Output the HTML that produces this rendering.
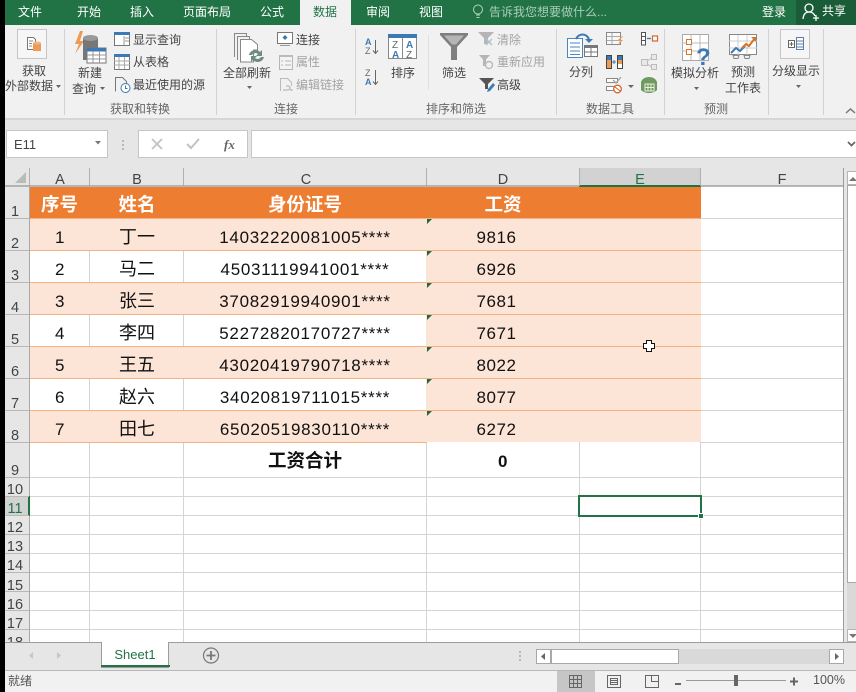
<!DOCTYPE html>
<html><head><meta charset="utf-8"><style>
html,body{margin:0;padding:0;background:#000}
svg{display:block;position:absolute;left:0;top:0}
text{font-family:"Liberation Sans","Noto Sans CJK SC",sans-serif;white-space:pre}
.r{font-size:12px;fill:#444}
.d{font-size:12px;fill:#a3a3a3}
.g{font-size:12px;fill:#666}
.m{text-anchor:middle}
.tab{font-size:12px;fill:#fff;text-anchor:middle}
.hd{font-size:14.5px;fill:#444;text-anchor:middle}
.rn{font-size:14.5px;fill:#444;text-anchor:middle}
.c{font-size:18px;fill:#111;text-anchor:middle}
.n{font-size:17px;fill:#111;text-anchor:middle;letter-spacing:.55px}
.i{font-size:17px;fill:#111;text-anchor:middle;letter-spacing:.7px}
.h{font-size:18.500px;fill:#fff;text-anchor:middle;font-weight:bold}
.b{font-size:18.500px;fill:#111;text-anchor:middle;font-weight:bold}
</style></head><body>
<svg width="856" height="692" viewBox="0 0 856 692" xmlns="http://www.w3.org/2000/svg">
<rect x="5" width="851" height="692" fill="#e6e6e6"/>
<!-- title tabs -->
<rect x="5" width="851" height="25" fill="#217346"/>
<rect x="796" width="60" height="25" fill="#1a5c38"/>
<rect x="5" y="25" width="851" height="93" fill="#f1f1f1"/>
<rect x="300" width="51" height="26" fill="#f1f1f1"/>
<rect x="5" y="118" width="851" height="2" fill="#d6d6d6"/>
<text class="tab" x="30" y="16">文件</text>
<text class="tab" x="89" y="16">开始</text>
<text class="tab" x="142" y="16">插入</text>
<text class="tab" x="207" y="16">页面布局</text>
<text class="tab" x="272" y="16">公式</text>
<text class="tab" x="325" y="16" style="fill:#217346">数据</text>
<text class="tab" x="378" y="16">审阅</text>
<text class="tab" x="431" y="16">视图</text>
<g fill="none" stroke="#b5d2c1"><circle cx="478" cy="9.500" r="4.500"/><path d="M476 15h4M476.500 17.500h3"/></g>
<text x="489" y="16" style="font-size:12px;fill:#a9cdb9">告诉我您想要做什么...</text>
<text class="tab" x="774" y="16">登录</text>
<g fill="none" stroke="#fff" stroke-width="1.300"><circle cx="809" cy="8" r="4"/><path d="M803 19c.5-5 3-7 6-7s5 1.500 6 4M813 18h6M816 15v6"/></g>
<text class="tab" x="834" y="15">共享</text>

<!-- group separators -->
<g stroke="#d2d2d2"><path d="M64.500 29v86M216.500 29v86M355.500 29v86M556.500 29v86M664.500 29v86M768.500 29v86M823.500 29v86"/><path d="M428.500 35v55" stroke="#e0e0e0"/></g>
<!-- group labels -->
<text class="g m" x="140" y="113">获取和转换</text>
<text class="g m" x="286" y="113">连接</text>
<text class="g m" x="456" y="113">排序和筛选</text>
<text class="g m" x="610" y="113">数据工具</text>
<text class="g m" x="716" y="113">预测</text>
<path d="M846 113l4.500-4 4.500 4" fill="none" stroke="#777" stroke-width="1.500"/>

<!-- 获取外部数据 -->
<rect x="17.500" y="29.500" width="29" height="29" fill="#f6f6f6" stroke="#c6c6c6"/>
<path d="M27.500 37.500h6l2 2v10h-8z" fill="#fff" stroke="#777"/><path d="M29 41h4M29 43.500h3M29 46h3" stroke="#888"/>
<path d="M33 43h8v8h-8z" fill="#ed9a56"/><ellipse cx="37" cy="43" rx="4" ry="1.500" fill="#f4b183"/>
<text class="r m" x="34" y="75">获取</text>
<text class="r" x="5" y="90">外部数据</text>
<path d="M56 85h5l-2.500 3z" fill="#666"/>

<!-- 新建查询 -->
<path d="M80 31l-5 13h4l-4 10 9-13h-4l3-10z" fill="#ed9a56"/>
<path d="M83 38h15v22H83z" fill="#777"/><ellipse cx="90.500" cy="38" rx="7.500" ry="3" fill="#999"/>
<rect x="87" y="48" width="19" height="15" fill="#fff" stroke="#777"/><rect x="87" y="48" width="19" height="3.500" fill="#3d7ab5"/>
<path d="M87 55h19M87 59h19M93 51v12M99.500 51v12" stroke="#999"/>
<text class="r m" x="90" y="77">新建</text>
<text class="r m" x="84" y="93">查询</text>
<path d="M100 87h5l-2.500 3z" fill="#666"/>

<rect x="114.500" y="32.500" width="15" height="13" fill="#fff" stroke="#777"/><rect x="114" y="32" width="16" height="3" fill="#3d7ab5"/><path d="M124 36v9M125 38h4M125 41h4" stroke="#999"/>
<text class="r" x="133" y="44">显示查询</text>
<rect x="114.500" y="55.500" width="15" height="14" fill="#fff" stroke="#777"/><rect x="114" y="54" width="16" height="3" fill="#3d7ab5"/><path d="M114 61h16M114 65h16M119 57v12M124.500 57v12" stroke="#aaa"/>
<text class="r" x="133" y="66">从表格</text>
<path d="M115.500 91.500v-14h7l4 4v4" fill="none" stroke="#777"/><circle cx="125.500" cy="88" r="4.500" fill="#fff" stroke="#3d7ab5"/><path d="M125.500 85.500v3h2" stroke="#3d7ab5" fill="none"/>
<text class="r" x="133" y="89">最近使用的源</text>

<!-- 全部刷新 -->
<path d="M234.500 57V33.500h12v3M237.500 60V36.500h12v3" fill="none" stroke="#888"/><path d="M240.500 62V39.500h11l6 5V50h-4v12z" fill="#fff" stroke="#888"/>
<path d="M249 55a6.500 6.500 0 0 1 11-3l2-2v6h-6l2-2a4 4 0 0 0-6 1zM264 57a6.500 6.500 0 0 1-11 3l-2 2v-6h6l-2 2a4 4 0 0 0 6-1z" fill="#6f8c7e"/>
<text class="r m" x="247" y="77">全部刷新</text>
<path d="M247 86h5l-2.500 3z" fill="#666"/>

<!-- 连接 -->
<rect x="277.500" y="32.500" width="15" height="11" fill="#fff" stroke="#777"/><path d="M285 35l2.500 2.500-2.500 2.500-2.500-2.500z" fill="#3d7ab5"/><path d="M280 45.500h10" stroke="#999"/>
<text class="r" x="296" y="44">连接</text>
<rect x="279.500" y="55.500" width="13" height="14" fill="#f4f4f4" stroke="#b5b5b5"/><rect x="279" y="55" width="14" height="2" fill="#bbb"/><path d="M281 61h2M285 61h6M281 65h2M285 65h6" stroke="#b5b5b5"/>
<text class="d" x="296" y="66">属性</text>
<path d="M280.500 91V78.500h7l4 4V86" fill="none" stroke="#bbb"/><path d="M283 90h5a2 2 0 0 0 0-4h-2M293 90h-3" fill="none" stroke="#aaa"/>
<text class="d" x="296" y="89">编辑链接</text>

<!-- sort -->
<text x="365" y="45" style="font-size:9px;font-weight:bold;fill:#3d7ab5">A</text><text x="365" y="54" style="font-size:9px;fill:#666">Z</text>
<path d="M375.500 40v13M373 50.500l2.500 3 2.500-3" fill="none" stroke="#666"/>
<text x="365" y="76" style="font-size:9px;fill:#666">Z</text><text x="365" y="85" style="font-size:9px;font-weight:bold;fill:#3d7ab5">A</text>
<path d="M375.500 70v14M373 81.500l2.500 3 2.500-3" fill="none" stroke="#666"/>
<rect x="388.500" y="34.500" width="28" height="24" fill="#fff" stroke="#888"/><rect x="388" y="34" width="29" height="4" fill="#3d7ab5"/><path d="M402.500 38v20" stroke="#888"/>
<text x="392" y="48" style="font-size:10px;fill:#666">Z</text><text x="406" y="48" style="font-size:10px;font-weight:bold;fill:#3d7ab5">A</text>
<text x="392" y="58" style="font-size:10px;font-weight:bold;fill:#3d7ab5">A</text><text x="406" y="58" style="font-size:10px;fill:#666">Z</text>
<text class="r m" x="403" y="77">排序</text>

<!-- filter -->
<path d="M440 33h28v2l-11 12v13h-6V47l-11-12z" fill="#7f7f7f"/><path d="M444 35.500h20l-8 9h-4z" fill="#b5b5b5"/>
<text class="r m" x="454" y="77">筛选</text>
<path d="M478 32h16l-6 6v6h-4v-6z" fill="#b5b5b5"/><path d="M486 39l6 6M492 39l-6 6" stroke="#aac4d0" stroke-width="1.500"/>
<text class="d" x="497" y="44">清除</text>
<path d="M479 55h11l-4 4.500V66h-3v-6.500z" fill="#b5b5b5"/><circle cx="489" cy="65" r="3.500" fill="none" stroke="#bbb" stroke-width="1.500"/>
<text class="d" x="497" y="66">重新应用</text>
<path d="M479 78h15l-6 6v5h-3v-5z" fill="#555"/><path d="M487 92l1-3 5-6 2 2-5 6z" fill="#3d7ab5"/>
<text class="r" x="497" y="89">高级</text>

<!-- 数据工具 -->
<rect x="567.500" y="38.500" width="15" height="19" fill="#fff" stroke="#4a86c0"/><path d="M570 43h10M570 47h10M570 51h10M570 54.500h10" stroke="#4a86c0"/>
<rect x="584.500" y="45.500" width="13" height="11" fill="#fff" stroke="#777"/><rect x="584" y="45" width="14" height="3" fill="#777"/><path d="M591 48v9M585 52h12" stroke="#777"/>
<path d="M576 39c3-6 10-6 13 0" fill="none" stroke="#3d7ab5" stroke-width="2"/><path d="M585 39h8l-4 4z" fill="#3d7ab5"/>
<text class="r m" x="581" y="76">分列</text>
<rect x="606.500" y="32.500" width="14" height="12" fill="#f8f8f8" stroke="#8a8a8a"/><path d="M607 36.500h13M607 40.500h13M612 33v11" stroke="#aaa"/><path d="M622 36l-5 5h3l-3 5 6-6h-3l3-4z" fill="#ed9a56"/>
<rect x="606.500" y="55.500" width="5" height="13" fill="#fff" stroke="#444"/><rect x="607" y="56" width="4" height="4" fill="#3d7ab5"/><rect x="607" y="60" width="4" height="4" fill="#ed9a56"/><rect x="607" y="64" width="4" height="4" fill="#ed9a56"/>
<rect x="617.500" y="55.500" width="5" height="13" fill="#fff" stroke="#444"/><rect x="618" y="56" width="4" height="4" fill="#3d7ab5"/><rect x="618" y="60" width="4" height="4" fill="#ed9a56"/>
<path d="M612 62h4M614 60v4" stroke="#3d7ab5"/>
<path d="M606.500 78.500h11v4h-11zM606.500 86.500h11v4h-11z" fill="#fff" stroke="#888"/><path d="M613 80l3 3 5-6" fill="none" stroke="#9aa8a0" stroke-width="1.300"/><circle cx="617.500" cy="89" r="3.800" fill="#fff" stroke="#d8632a" stroke-width="1.300"/><path d="M615 87l5 4" stroke="#d8632a"/><path d="M628 85h6l-3 3z" fill="#666"/>
<rect x="641.500" y="32.500" width="4" height="12.500" fill="#fff" stroke="#555"/><path d="M641 36.500h5M641 40.500h5" stroke="#555"/><path d="M647 38.500h4" stroke="#3d7ab5" stroke-width="1.300"/><rect x="652.500" y="36" width="5" height="5" fill="#fff" stroke="#d8632a" stroke-width="1.200"/>
<path d="M641.500 59.500h6v6h-6zM651.500 54.500h5v5h-5zM651.500 64.500h5v5h-5zM647.500 61l4-3M647.500 64l4 3" fill="#e8e8e8" stroke="#bcbcbc"/>
<path d="M641 82c1-3 4-5 8-5s7 2 8 5v8c-2 2-5 3-8 3s-6-1-8-3z" fill="#6f9a5f"/><path d="M645 84h9v7h-9zM645 87.500h9M648 84v7M651 84v7" fill="none" stroke="#e8f0e0"/>

<!-- 预测 -->
<rect x="682.500" y="34.500" width="26" height="26" fill="#fff" stroke="#aaa"/><path d="M682 43h26M682 51h26M691 35v25M700 35v25" stroke="#bbb"/>
<rect x="686.500" y="39.500" width="5" height="5" fill="#fff" stroke="#d8732a"/><rect x="686.500" y="49.500" width="5" height="5" fill="#fff" stroke="#d8732a"/>
<text x="696" y="65" style="font-size:24px;font-weight:bold;fill:#3d7ab5">?</text>
<text class="r m" x="695" y="77">模拟分析</text>
<path d="M694 87h5l-2.500 3z" fill="#666"/>
<rect x="729.500" y="34.500" width="27" height="20" fill="#fff" stroke="#888"/><path d="M729 41h28M729 48h28M738 35v20M747 35v20" stroke="#ccc"/>
<path d="M731 53l5-5 4 3 5-5" fill="none" stroke="#3d7ab5" stroke-width="2"/><path d="M742 48l4-4 3 2 6-8" fill="none" stroke="#d8732a" stroke-width="2"/><path d="M751 37h5v5z" fill="#d8732a"/>
<path d="M733 55.500h6l-1 3h-4zM744 55.500h6l-1 3h-4z" fill="none" stroke="#888"/>
<text class="r m" x="743" y="76">预测</text>
<text class="r m" x="743" y="92">工作表</text>

<!-- 分级显示 -->
<rect x="780.500" y="29.500" width="29" height="29" fill="#f6f6f6" stroke="#c6c6c6"/>
<rect x="788.500" y="40.500" width="6" height="7" fill="#fff" stroke="#666"/><path d="M789.500 44h4M791.500 42v4" stroke="#666"/>
<rect x="796.500" y="37.500" width="7" height="12" fill="#fff" stroke="#5b7fa8"/><path d="M797 41h6M797 44h6M797 47h6" stroke="#5b7fa8"/>
<text class="r m" x="796" y="75">分级显示</text>
<path d="M796 85h5l-2.500 3z" fill="#666"/>

<!-- formula bar -->
<rect x="6.500" y="130.500" width="101" height="27" fill="#fff" stroke="#c6c6c6"/>
<text x="14" y="149" style="font-size:13px;fill:#444">E11</text>
<path d="M95 141h6l-3 3.500z" fill="#777"/>
<path d="M123 140v2M123 144v2M123 148v2" stroke="#aaa" stroke-width="1.500"/>
<rect x="138.500" y="130.500" width="109" height="27" fill="#fff" stroke="#c6c6c6"/>
<path d="M152 139l10 10M162 139l-10 10" stroke="#c2c2c2" stroke-width="1.800"/>
<path d="M187 144l4 4 8-9" fill="none" stroke="#c2c2c2" stroke-width="2"/>
<text x="224" y="149" style="font-family:'Liberation Serif',serif;font-size:13px;font-style:italic;font-weight:bold;fill:#666">fx</text>
<rect x="251.500" y="130.500" width="606" height="27" fill="#fff" stroke="#c6c6c6"/>
<path d="M848 142l3.500 3.500 3.500-3.500" fill="none" stroke="#666" stroke-width="1.800"/>

<!-- grid white -->
<rect x="29" y="186" width="814" height="456" fill="#fff"/>
<!-- header -->
<rect x="579" y="168" width="122" height="18" fill="#d2d2d2"/>
<rect x="579" y="185" width="122" height="2" fill="#217346"/>
<path d="M26 172v11H15z" fill="#b8bdb9"/>
<g stroke="#b0b0b0"><path d="M29.500 168v18M89.500 168v18M183.500 168v18M426.500 168v18M579.500 168v18M700.500 168v18"/></g>
<path d="M5 186h574M701 186h142" stroke="#a0a0a0" stroke-width="1.500"/>
<path d="M29.500 186v456" stroke="#a8a8a8"/>
<text class="hd" x="60" y="184">A</text>
<text class="hd" x="137" y="184">B</text>
<text class="hd" x="306" y="184">C</text>
<text class="hd" x="503" y="184">D</text>
<text class="hd" x="640" y="184" style="fill:#217346">E</text>
<text class="hd" x="782" y="184">F</text>

<!-- gridlines -->
<g stroke="#d4d4d4"><path d="M89.500 442v200M183.500 442v200M426.500 442v200M579.500 442v200M700.500 442v200M30 477.500h814M30 496.500h814M30 515.500h814M30 534.500h814M30 553.500h814M30 572.500h814M30 591.500h814M30 610.500h814M30 629.500h814M701 218.500h143M701 250.500h143M701 282.500h143M701 314.500h143M701 346.500h143M701 378.500h143M701 410.500h143M701 442.500h143"/>
<path d="M89.500 250v32M183.500 250v32M89.500 314v32M183.500 314v32M89.500 378v32M183.500 378v32"/></g>
<path d="M843.500 168v474" stroke="#9c9c9c"/>
<!-- row header lines -->
<rect x="5" y="496" width="24" height="20" fill="#d2d2d2"/><rect x="28" y="496" width="2" height="20" fill="#217346"/>
<g stroke="#b8b8b8"><path d="M5 218.500h24M5 250.500h24M5 282.500h24M5 314.500h24M5 346.500h24M5 378.500h24M5 410.500h24M5 442.500h24M5 477.500h24M5 496.500h24M5 515.500h24M5 534.500h24M5 553.500h24M5 572.500h24M5 591.500h24M5 610.500h24M5 629.500h24"/></g>

<!-- table -->
<rect x="30" y="187" width="671" height="31" fill="#ed7d31"/>
<rect x="30" y="218" width="671" height="32" fill="#fce4d6"/>
<rect x="426" y="250" width="275" height="32" fill="#fce4d6"/>
<rect x="30" y="282" width="671" height="32" fill="#fce4d6"/>
<rect x="426" y="314" width="275" height="32" fill="#fce4d6"/>
<rect x="30" y="346" width="671" height="32" fill="#fce4d6"/>
<rect x="426" y="378" width="275" height="32" fill="#fce4d6"/>
<rect x="30" y="410" width="671" height="32" fill="#fce4d6"/>
<g stroke="#f4b183"><path d="M30 218.500h671M30 250.500h671M30 282.500h671M30 314.500h671M30 346.500h671M30 378.500h671M30 410.500h671M30 442.500h397"/></g>
<g fill="#1e6b3f"><path d="M427 219h5l-5 5zM427 251h5l-5 5zM427 283h5l-5 5zM427 315h5l-5 5zM427 347h5l-5 5zM427 379h5l-5 5zM427 411h5l-5 5z"/></g>

<g>
<text class="h" x="59.500" y="211">序号</text><text class="h" x="137" y="211">姓名</text><text class="h" x="305" y="211">身份证号</text><text class="h" x="503" y="211">工资</text>
<text class="n" x="60" y="243">1</text><text class="c" x="137" y="243">丁一</text><text class="i" x="305" y="243">14032220081005****</text><text class="n" x="496.500" y="243">9816</text>
<text class="n" x="60" y="275">2</text><text class="c" x="137" y="275">马二</text><text class="i" x="305" y="275">45031119941001****</text><text class="n" x="496.500" y="275">6926</text>
<text class="n" x="60" y="307">3</text><text class="c" x="137" y="307">张三</text><text class="i" x="305" y="307">37082919940901****</text><text class="n" x="496.500" y="307">7681</text>
<text class="n" x="60" y="339">4</text><text class="c" x="137" y="339">李四</text><text class="i" x="305" y="339">52272820170727****</text><text class="n" x="496.500" y="339">7671</text>
<text class="n" x="60" y="371">5</text><text class="c" x="137" y="371">王五</text><text class="i" x="305" y="371">43020419790718****</text><text class="n" x="496.500" y="371">8022</text>
<text class="n" x="60" y="403">6</text><text class="c" x="137" y="403">赵六</text><text class="i" x="305" y="403">34020819711015****</text><text class="n" x="496.500" y="403">8077</text>
<text class="n" x="60" y="435">7</text><text class="c" x="137" y="435">田七</text><text class="i" x="305" y="435">65020519830110****</text><text class="n" x="496.500" y="435">6272</text>
<text class="b" x="305" y="467">工资合计</text><text class="n" x="503" y="467" style="font-weight:bold">0</text>
</g>
<!-- row numbers -->
<text class="rn" x="15" y="216">1</text><text class="rn" x="15" y="248">2</text><text class="rn" x="15" y="280">3</text><text class="rn" x="15" y="312">4</text><text class="rn" x="15" y="344">5</text><text class="rn" x="15" y="376">6</text><text class="rn" x="15" y="408">7</text><text class="rn" x="15" y="440">8</text><text class="rn" x="15" y="475">9</text>
<text class="rn" x="15" y="494">10</text><text class="rn" x="15" y="513" style="fill:#217346">11</text><text class="rn" x="15" y="532">12</text><text class="rn" x="15" y="551">13</text><text class="rn" x="15" y="570">14</text><text class="rn" x="15" y="590">15</text><text class="rn" x="15" y="609">16</text><text class="rn" x="15" y="628">17</text>
<g><clipPath id="cp"><rect x="5" y="630" width="24" height="12"/></clipPath><text class="rn" x="15" y="647" clip-path="url(#cp)">18</text></g>

<!-- selection -->
<rect x="579" y="496" width="122" height="20" fill="none" stroke="#217346" stroke-width="2"/>
<rect x="698" y="513" width="6" height="6" fill="#fff"/><rect x="699" y="514" width="4" height="4" fill="#217346"/>
<!-- cursor -->
<path d="M646.500 340.500h5v3h3v5h-3v3h-5v-3h-3v-5h3z" fill="#fff" stroke="#111"/>

<!-- v scroll -->
<rect x="844" y="168" width="12" height="474" fill="#e6e6e6"/>
<rect x="847.500" y="171.500" width="9" height="13" fill="#fff" stroke="#b5b5b5"/>
<path d="M849 181l4-4 4 4z" fill="#777"/>
<rect x="847" y="583" width="9" height="46" fill="#d9d9d9"/>
<rect x="847.500" y="185.500" width="9" height="397" fill="#fff" stroke="#a8a8a8"/>
<rect x="847.500" y="629.500" width="9" height="12" fill="#fff" stroke="#b5b5b5"/>
<path d="M849 634l4 4 4-4z" fill="#777"/>

<!-- tab bar -->
<rect x="5" y="643" width="851" height="27" fill="#e6e6e6"/>
<path d="M5 642.500h851" stroke="#9c9c9c"/>
<path d="M101.500 642.500v25h67v-25" fill="#fff" stroke="#9c9c9c"/>
<rect x="102" y="642" width="66" height="4" fill="#fff"/>
<rect x="101" y="665" width="69" height="2" fill="#217346"/>
<text x="135" y="659" style="font-size:13px;fill:#217346;text-anchor:middle">Sheet1</text>
<path d="M33 652l-4 3.500 4 3.500z" fill="#c6c6c6"/><path d="M57 652l4 3.500-4 3.500z" fill="#c6c6c6"/>
<circle cx="211" cy="655.500" r="7.500" fill="none" stroke="#777" stroke-width="1.200"/><path d="M206.500 655.500h9M211 651v9" stroke="#777" stroke-width="1.800"/>
<path d="M520 651v2M520 655v2M520 659v2" stroke="#aaa" stroke-width="1.500"/>
<rect x="537" y="649" width="306" height="15" fill="#d9d9d9"/>
<rect x="536.500" y="649.500" width="14" height="14" fill="#fff" stroke="#a8a8a8"/><path d="M545 653l-4 3.500 4 3.500z" fill="#666"/>
<rect x="551.500" y="649.500" width="127" height="14" fill="#fff" stroke="#a8a8a8"/>
<rect x="829.500" y="649.500" width="14" height="14" fill="#fff" stroke="#a8a8a8"/><path d="M835 653l4 3.500-4 3.500z" fill="#666"/>

<!-- status bar -->
<rect x="5" y="670" width="851" height="22" fill="#f1f1f1"/>
<path d="M5 670.500h851" stroke="#b8b8b8"/>
<text x="8" y="685" style="font-size:12px;fill:#555">就绪</text>
<rect x="557" y="671" width="38" height="21" fill="#c6c6c6"/>
<path d="M569.500 675.500h12v12h-12zM569.500 679.500h12M569.500 683.500h12M573.500 675.500v12M577.500 675.500v12" fill="none" stroke="#666"/>
<path d="M607.500 675.500h13v12h-13z" fill="none" stroke="#666"/><path d="M610.500 678.500h7v6h-7zM611 680.500h6M611 682.500h6" fill="none" stroke="#666"/>
<path d="M645.500 675.500h13v12h-13zM651.500 675.500v6h7" fill="none" stroke="#666"/>
<path d="M675 684h6" stroke="#666" stroke-width="2"/>
<path d="M686 680.500h100" stroke="#999"/>
<rect x="734" y="675" width="4" height="11" fill="#666"/>
<path d="M790 681.500h8M794 677.500v8" stroke="#666" stroke-width="2"/>
<text x="813" y="684" style="font-size:12.500px;fill:#555">100%</text>
<rect width="5" height="692" fill="#000"/>
</svg>
</body></html>
